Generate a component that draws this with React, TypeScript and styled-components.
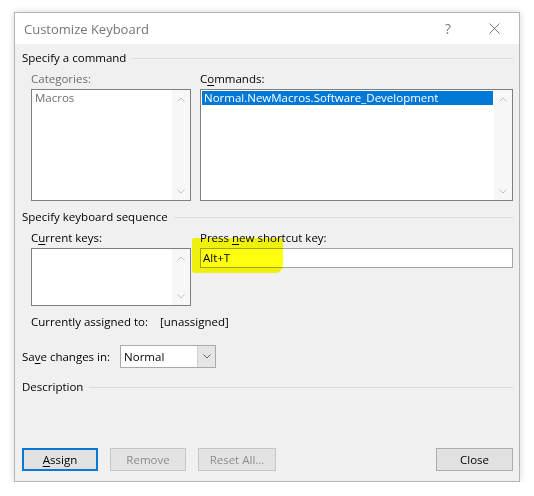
import React from 'react';
import styled, { createGlobalStyle } from 'styled-components';

const GlobalStyle = createGlobalStyle`
  html, body { margin: 0; padding: 0; background: #ffffff; }
  body {
    font-family: "Segoe UI", "Open Sans", "Noto Sans", sans-serif;
    font-size: 11.5px;
    color: #000;
  }
  u { text-underline-offset: 2px; }
`;

const Page = styled.div`
  padding: 12px 0 0 14px;
`;

const Dialog = styled.div`
  width: 506px;
  height: 470px;
  box-sizing: border-box;
  border: 1px solid #b4b4b4;
  box-shadow: 0 0 7px rgba(0, 0, 0, 0.16);
  background: #f0f0f0;
  display: flex;
  flex-direction: column;
`;

const TitleBar = styled.div`
  height: 31px;
  background: #fff;
  display: flex;
  align-items: center;
  padding: 0 2px 0 9px;
`;

const Title = styled.div`
  flex: 1;
  font-size: 13px;
  color: #767676;
`;

const TitleButton = styled.div`
  width: 46px;
  height: 31px;
  display: flex;
  align-items: center;
  justify-content: center;
  color: #7a7a7a;
  font-size: 14px;
`;

const Body = styled.div`
  flex: 1;
  display: flex;
  flex-direction: column;
  padding: 0 6px 10px 7px;
`;

const GroupHeader = styled.div<{ $top: number }>`
  display: flex;
  align-items: center;
  gap: 6px;
  height: 16px;
  line-height: 16px;
  margin-top: ${(p) => p.$top}px;
  &::after {
    content: "";
    flex: 1;
    height: 1px;
    background: #dcdcdc;
  }
`;

const Columns = styled.div<{ $top: number }>`
  display: grid;
  grid-template-columns: 160px 313px;
  column-gap: 9px;
  padding-left: 9px;
  margin-top: ${(p) => p.$top}px;
`;

const Column = styled.div`
  position: relative;
  display: flex;
  flex-direction: column;
`;

const Label = styled.div<{ $disabled?: boolean }>`
  line-height: 16px;
  margin-bottom: 2px;
  color: ${(p) => (p.$disabled ? '#6d6d6d' : '#000')};
`;

const ListBox = styled.div<{ $height: number }>`
  height: ${(p) => p.$height}px;
  box-sizing: border-box;
  border: 1px solid #7f7f7f;
  background: #fff;
  display: flex;
`;

const ListItems = styled.div`
  flex: 1;
  padding: 1px 1px 0 1px;
`;

const ListItem = styled.div<{ $selected?: boolean; $disabled?: boolean }>`
  height: 14px;
  line-height: 14px;
  padding-left: 2px;
  white-space: nowrap;
  background: ${(p) => (p.$selected ? '#0078d7' : 'transparent')};
  color: ${(p) => (p.$selected ? '#fff' : p.$disabled ? '#6d6d6d' : '#000')};
`;

const ScrollBar = styled.div`
  width: 18px;
  background: #f7f7f7;
  display: flex;
  flex-direction: column;
  justify-content: space-between;
  align-items: center;
  padding: 7px 0 6px;
`;

const TextInput = styled.div`
  height: 20px;
  box-sizing: border-box;
  border: 1px solid #a3a3a3;
  background: #fff;
  line-height: 18px;
  padding-left: 2px;
`;

const Highlight = styled.div`
  position: absolute;
  left: -8px;
  top: 8px;
  width: 91px;
  height: 35px;
  background: #ffff10;
  mix-blend-mode: multiply;
  border-radius: 2px 3px 8px 3px;
  filter: blur(0.6px);
  pointer-events: none;
`;

const InfoRow = styled.div`
  display: flex;
  margin-top: 8px;
  padding-left: 9px;
  line-height: 16px;
  gap: 12px;
`;

const SaveRow = styled.div`
  display: flex;
  align-items: center;
  margin-top: 15px;
  gap: 10px;
`;

const Select = styled.div`
  width: 96px;
  height: 23px;
  box-sizing: border-box;
  border: 1px solid #a9a9a9;
  background: #fff;
  display: flex;
`;

const SelectValue = styled.div`
  flex: 1;
  line-height: 21px;
  padding-left: 3px;
`;

const SelectButton = styled.div`
  width: 17px;
  border-left: 1px solid #cfcfcf;
  background: #e5e5e5;
  display: flex;
  align-items: center;
  justify-content: center;
`;

const Spacer = styled.div`
  flex: 1;
`;

const ButtonRow = styled.div`
  display: flex;
  gap: 12px;
`;

const Button = styled.div<{ $width: number; $default?: boolean; $disabled?: boolean }>`
  width: ${(p) => p.$width}px;
  height: 23px;
  box-sizing: border-box;
  display: flex;
  align-items: center;
  justify-content: center;
  background: ${(p) => (p.$disabled ? '#e3e3e3' : '#e1e1e1')};
  border: ${(p) => (p.$default ? '2px solid #0a78d4' : p.$disabled ? '1px solid #c6c6c6' : '1px solid #adadad')};
  color: ${(p) => (p.$disabled ? '#8c8c8c' : '#000')};
`;

const Chevron = ({ up, color }: { up?: boolean; color: string }) => (
  <svg width="8" height="5" viewBox="0 0 8 5">
    <path d={up ? 'M0.5 4.5 L4 1 L7.5 4.5' : 'M0.5 0.5 L4 4 L7.5 0.5'} fill="none" stroke={color} strokeWidth="1" />
  </svg>
);

const Scroll = () => (
  <ScrollBar>
    <Chevron up color="#c3c3c3" />
    <Chevron color="#c3c3c3" />
  </ScrollBar>
);

export default function App() {
  return (
    <Page>
      <GlobalStyle />
      <Dialog>
        <TitleBar>
          <Title>Customize Keyboard</Title>
          <TitleButton>?</TitleButton>
          <TitleButton>
            <svg width="11" height="11" viewBox="0 0 11 11">
              <path d="M0.5 0.5 L10.5 10.5 M10.5 0.5 L0.5 10.5" stroke="#7a7a7a" strokeWidth="1" />
            </svg>
          </TitleButton>
        </TitleBar>
        <Body>
          <GroupHeader $top={6}>Specify a command</GroupHeader>
          <Columns $top={5}>
            <Column>
              <Label $disabled>Categories:</Label>
              <ListBox $height={112}>
                <ListItems>
                  <ListItem $disabled>Macros</ListItem>
                </ListItems>
                <Scroll />
              </ListBox>
            </Column>
            <Column>
              <Label>
                C<u>o</u>mmands:
              </Label>
              <ListBox $height={112}>
                <ListItems>
                  <ListItem $selected>Normal.NewMacros.Software_Development</ListItem>
                </ListItems>
                <Scroll />
              </ListBox>
            </Column>
          </Columns>

          <GroupHeader $top={8}>Specify keyboard sequence</GroupHeader>
          <Columns $top={5}>
            <Column>
              <Label>
                C<u>u</u>rrent keys:
              </Label>
              <ListBox $height={58}>
                <ListItems />
                <Scroll />
              </ListBox>
            </Column>
            <Column>
              <Label>
                Press <u>n</u>ew shortcut key:
              </Label>
              <TextInput>Alt+T</TextInput>
              <Highlight />
            </Column>
          </Columns>

          <InfoRow>
            <span>Currently assigned to:</span>
            <span>[unassigned]</span>
          </InfoRow>

          <SaveRow>
            <span>
              Sa<u>v</u>e changes in:
            </span>
            <Select>
              <SelectValue>Normal</SelectValue>
              <SelectButton>
                <Chevron color="#606060" />
              </SelectButton>
            </Select>
          </SaveRow>

          <GroupHeader $top={11}>Description</GroupHeader>

          <Spacer />

          <ButtonRow>
            <Button $width={76} $default>
              <span>
                <u>A</u>ssign
              </span>
            </Button>
            <Button $width={76} $disabled>
              Remove
            </Button>
            <Button $width={78} $disabled>
              Reset All...
            </Button>
            <Spacer />
            <Button $width={77}>Close</Button>
          </ButtonRow>
        </Body>
      </Dialog>
    </Page>
  );
}
